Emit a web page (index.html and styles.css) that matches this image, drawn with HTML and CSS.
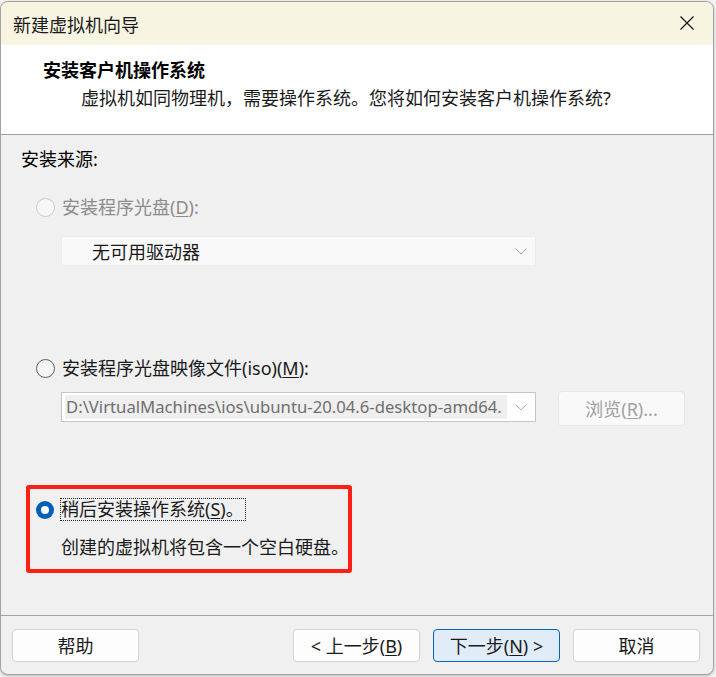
FILE: index.html
```html
<!DOCTYPE html>
<html lang="zh-CN">
<head>
<meta charset="utf-8">
<title>新建虚拟机向导</title>
<link rel="stylesheet" href="styles.css">
</head>
<body>
<div class="window">
  <div class="titlebar">
    <span class="title">新建虚拟机向导</span>
    <svg class="close" width="16" height="16" viewBox="0 0 16 16"><path d="M1.5 1.5 L14.5 14.5 M14.5 1.5 L1.5 14.5" stroke="#1a1a1a" stroke-width="1.3" fill="none"/></svg>
  </div>
  <div class="header">
    <div class="h-title">安装客户机操作系统</div>
    <div class="h-sub">虚拟机如同物理机，需要操作系统。您将如何安装客户机操作系统?</div>
  </div>
  <div class="content">
    <div class="section-label">安装来源:</div>

    <div class="radio-row row-disc">
      <span class="radio disabled"></span>
      <span class="label disabled-text">安装程序光盘(<u>D</u>):</span>
    </div>
    <div class="combo combo-disc">
      <span class="combo-text">无可用驱动器</span>
      <svg class="chev" width="12" height="7" viewBox="0 0 12 7"><path d="M0.5 0.5 L6 6 L11.5 0.5" stroke="#a8a8a8" stroke-width="1" fill="none"/></svg>
    </div>

    <div class="radio-row row-iso">
      <span class="radio"></span>
      <span class="label">安装程序光盘映像文件(iso)(<u>M</u>):</span>
    </div>
    <div class="iso-row">
      <div class="combo combo-iso">
        <span class="path-text">D:\VirtualMachines\ios\ubuntu-20.04.6-desktop-amd64.</span>
        <svg class="chev" width="12" height="7" viewBox="0 0 12 7"><path d="M0.5 0.5 L6 6 L11.5 0.5" stroke="#b0b0b0" stroke-width="1" fill="none"/></svg>
      </div>
      <div class="btn btn-disabled browse">浏览(<u>R</u>)...</div>
    </div>

    <div class="mark">
      <div class="radio-row row-later">
        <span class="radio checked"></span>
        <span class="label focus">稍后安装操作系统(<u>S</u>)。</span>
      </div>
      <div class="desc">创建的虚拟机将包含一个空白硬盘。</div>
    </div>
  </div>
  <div class="footer">
    <div class="btn">帮助</div>
    <div class="btn-group">
      <div class="btn">&lt; 上一步(<u>B</u>)</div>
      <div class="btn btn-primary">下一步(<u>N</u>) &gt;</div>
      <div class="btn">取消</div>
    </div>
  </div>
</div>
</body>
</html>
```

FILE: styles.css
```css
* { box-sizing: border-box; }
html, body { margin: 0; padding: 0; }
body {
  width: 716px;
  height: 677px;
  background: #f3f3f3;
  font-family: "Noto Sans", "Noto Sans CJK SC", sans-serif;
  font-size: 18px;
  color: #000;
  overflow: hidden;
}
u { text-decoration: underline; text-underline-offset: 2px; }

.window {
  margin: 1px 0 0 0;
  width: 714px;
  height: 674px;
  border: 1px solid #a2a2a2;
  border-radius: 8px;
  background: #f0f0f0;
  overflow: hidden;
  display: flex;
  flex-direction: column;
  box-shadow: 0 1px 3px rgba(0,0,0,0.25);
}

.titlebar {
  height: 43px;
  background: #f8f4e2;
  display: flex;
  align-items: center;
  justify-content: space-between;
  padding: 0 18px 0 12px;
}
.title {
  font-family: "Noto Sans CJK SC", sans-serif;
  font-size: 18px;
  line-height: 24px;
  color: #1a1a1a;
}
.close { display: block; margin-top: -1px; }

.header {
  height: 90px;
  background: #fff;
  border-bottom: 1px solid #a0a0a0;
  padding: 12px 0 0 42px;
}
.h-title {
  font-family: "Noto Sans CJK SC", sans-serif;
  font-weight: 700;
  font-size: 18px;
  line-height: 24px;
}
.h-sub {
  margin: 5px 0 0 38px;
  line-height: 24px;
  color: #1a1a1a;
}

.content {
  flex: 1;
  padding: 12px 0 0 20px;
}
.section-label { line-height: 24px; }

.radio-row {
  display: flex;
  align-items: center;
  gap: 7px;
  margin-left: 15px;
}
.row-disc { margin-top: 24px; }
.row-iso { margin-top: 90px; }

.label { line-height: 24px; color: #1a1a1a; white-space: nowrap; }
.disabled-text { color: #8c8c8c; }

.radio {
  width: 19px;
  height: 19px;
  border-radius: 50%;
  border: 1px solid #5c5c5c;
  background: #f5f5f5;
  flex: none;
  position: relative;
}
.radio.disabled {
  border-color: #c9c9c9;
  background: #f7f7f7;
}
.radio.checked {
  width: 18px;
  height: 18px;
  border: none;
  background: #005fb8;
}
.radio.checked::after {
  content: "";
  position: absolute;
  left: 5px;
  top: 5px;
  width: 8px;
  height: 8px;
  border-radius: 50%;
  background: #fff;
}

.combo {
  margin-left: 40px;
  width: 475px;
  height: 30px;
  display: flex;
  align-items: center;
  justify-content: space-between;
  padding-right: 8px;
}
.combo-disc {
  margin-top: 17px;
  background: #f9f9f9;
  border: 1px solid #ececec;
  padding-left: 30px;
}
.combo-text {
  font-family: "Noto Sans CJK SC", sans-serif;
  line-height: 24px;
  color: #1a1a1a;
}
.chev { display: block; flex: none; }

.iso-row {
  margin-top: 11px;
  display: flex;
  align-items: flex-start;
  gap: 22px;
}
.combo-iso {
  margin-top: 1px;
  background: #fff;
  border: 1px solid #c6c6c6;
  padding-left: 3px;
}
.path-text {
  display: block;
  width: 442px;
  height: 24px;
  white-space: nowrap;
  background: #efefef;
  color: #6e6e6e;
  font-size: 16.7px;
  line-height: 24px;
  padding-left: 1px;
  overflow: hidden;
}

.btn {
  width: 127px;
  height: 33px;
  border: 1px solid #d3d3d3;
  border-radius: 4px;
  background: #fdfdfd;
  display: flex;
  align-items: center;
  justify-content: center;
  line-height: 24px;
  color: #1a1a1a;
}
.btn-disabled {
  background: #f9f9f9;
  border-color: #e6e6e6;
  color: #a0a0a0;
}
.browse { width: 127px; height: 35px; }
.btn-primary {
  background: #e0edf9;
  border-color: #0067c0;
}

.mark {
  margin-top: 59px;
  margin-left: 5px;
  width: 326px;
  height: 88px;
  border: 4px solid #fe1f17;
  border-radius: 3px;
  padding: 9px 0 0 6px;
}
.row-later { margin-left: 0; gap: 6px; }
.focus {
  border: 1px dotted #222;
  height: 23px;
  line-height: 21px;
  padding: 0 1px 0 0;
}
.desc {
  margin: 14px 0 0 25px;
  line-height: 24px;
  color: #1a1a1a;
  white-space: nowrap;
}

.footer {
  height: 59px;
  border-top: 1px solid #a3a3a3;
  padding: 13px 13px 0 11px;
  display: flex;
  justify-content: space-between;
  align-items: flex-start;
}
.btn-group { display: flex; gap: 13px; }
```
